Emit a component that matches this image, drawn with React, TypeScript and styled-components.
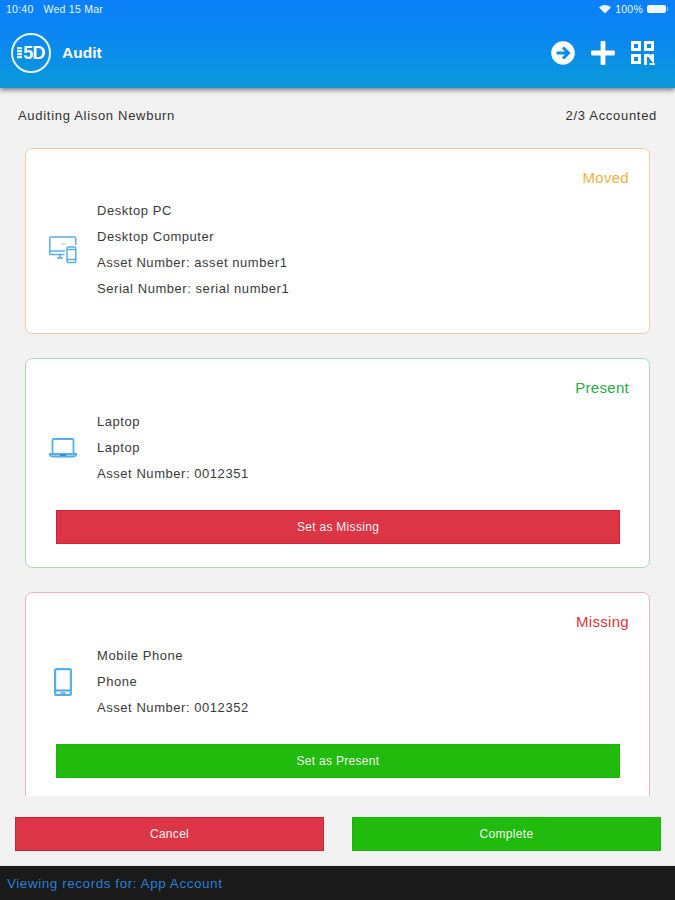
import React from "react";
import styled, { createGlobalStyle } from "styled-components";

const Global = createGlobalStyle`
  html, body { margin: 0; padding: 0; height: 100%; background: #f2f2f2; }
  #root { height: 100%; }
  * { box-sizing: border-box; }
`;

const Page = styled.div`
  width: 675px;
  height: 900px;
  display: flex;
  flex-direction: column;
  overflow: hidden;
  background: #f2f2f2;
  font-family: "Liberation Sans", Arial, sans-serif;
  color: #333;
`;

const Header = styled.header`
  height: 88px;
  flex: none;
  background: linear-gradient(180deg, #0a80fb 0%, #0a88f0 45%, #0a9ad8 100%);
  box-shadow: 0 2px 5px rgba(0, 0, 0, 0.5);
  color: #fff;
  position: relative;
  z-index: 1;
`;

const StatusBar = styled.div`
  height: 18px;
  padding: 0 7px 0 6px;
  display: flex;
  align-items: center;
  justify-content: space-between;
  font-size: 10.5px;
  letter-spacing: 0.25px;
  color: #eaf4ff;
`;

const StatusGroup = styled.div<{ $gap: number }>`
  display: flex;
  align-items: center;
  gap: ${(p) => p.$gap}px;
`;

const Battery = styled.span`
  width: 19px;
  height: 8px;
  margin-right: 2px;
  background: #eef6ff;
  border-radius: 2px;
  display: block;
  position: relative;
  &::after {
    content: "";
    position: absolute;
    right: -2px;
    top: 2px;
    width: 1.500px;
    height: 4px;
    background: rgba(238, 246, 255, 0.6);
  }
`;

const NavBar = styled.div`
  height: 70px;
  padding: 0 20px 0 11px;
  display: flex;
  align-items: center;
  justify-content: space-between;
`;

const Brand = styled.div`
  display: flex;
  align-items: center;
  gap: 11px;
`;

const Logo = styled.div`
  width: 40px;
  height: 40px;
  border: 2px solid #e8f4ff;
  border-radius: 50%;
  display: flex;
  align-items: center;
  justify-content: center;
  gap: 1px;
  font-size: 18px;
  font-weight: 700;
  letter-spacing: -0.8px;
`;

const LogoMark = styled.span`
  width: 5px;
  height: 12px;
  flex: none;
  background: repeating-linear-gradient(180deg, rgba(255, 255, 255, 0.85) 0 2px, rgba(255, 255, 255, 0.25) 2px 3px);
`;

const Title = styled.span`
  font-size: 15.5px;
  font-weight: 700;
`;

const NavIcons = styled.div`
  display: flex;
  align-items: center;
  gap: 16px;
`;

const Summary = styled.div`
  height: 55px;
  flex: none;
  padding: 0 18px 0 18px;
  margin-bottom: 5px;
  display: flex;
  align-items: center;
  justify-content: space-between;
  font-size: 13px;
  letter-spacing: 0.7px;
  color: #333;
`;

const List = styled.main`
  flex: 1;
  min-height: 0;
  overflow: hidden;
  padding: 0 25px;
  display: flex;
  flex-direction: column;
  gap: 24px;
`;

const palette = {
  moved: { border: "#f8c8a0", text: "#f7b13a" },
  present: { border: "#a8dca8", text: "#2aa84a" },
  missing: { border: "#f0b4ba", text: "#e2323f" },
};

type Status = keyof typeof palette;

const Card = styled.section<{ $status: Status; $action: boolean }>`
  flex: none;
  background: #fff;
  border: 1px solid ${(p) => palette[p.$status].border};
  border-radius: 7px;
  padding: 19px 20px ${(p) => (p.$action ? 23 : 31)}px 30px;
`;

const StatusLabel = styled.div<{ $status: Status }>`
  height: 20px;
  line-height: 20px;
  text-align: right;
  font-size: 15px;
  letter-spacing: 0.3px;
  color: ${(p) => palette[p.$status].text};
`;

const Body = styled.div<{ $action: boolean }>`
  margin-top: ${(p) => (p.$action ? 11 : 10)}px;
  display: flex;
  align-items: center;
`;

const IconCell = styled.div`
  width: 16px;
  flex: none;
  margin-left: -1px;
  margin-right: 26px;
  display: flex;
  justify-content: center;
  color: #58aee6;
  & > svg { flex: none; }
`;

const Lines = styled.div`
  display: flex;
  flex-direction: column;
`;

const Line = styled.div`
  height: 26px;
  line-height: 26px;
  font-size: 13px;
  letter-spacing: 0.55px;
  color: #3a3a3a;
`;

const Action = styled.button<{ $tone: "red" | "green" }>`
  display: block;
  width: calc(100% - 9px);
  height: 34px;
  margin-top: 23px;
  border: 1px solid ${(p) => (p.$tone === "red" ? "#d81f33" : "#16b900")};
  background: ${(p) => (p.$tone === "red" ? "#dc3545" : "#20bb0c")};
  color: #f4f4f4;
  font: inherit;
  font-size: 12px;
  letter-spacing: 0.3px;
  padding: 0;
`;

const Footer = styled.footer`
  height: 69px;
  flex: none;
  background: #f2f2f2;
  padding: 21px 14px 14px 15px;
  display: flex;
  gap: 28px;
  position: relative;
`;

const FooterButton = styled(Action)`
  flex: 1;
  margin: 0;
  width: auto;
`;

const BottomBar = styled.div`
  height: 35px;
  flex: none;
  background: #1a1a1a;
  border-top: 1px solid #e8e8e8;
  padding: 0 7px;
  display: flex;
  align-items: center;
  font-size: 13.5px;
  letter-spacing: 0.55px;
  color: #2a7fd6;
`;

const WifiIcon = () => (
  <svg width="12" height="10" viewBox="0 0 24 20" fill="#eaf4ff">
    <path d="M12 19 0 7a17 17 0 0 1 24 0z" />
  </svg>
);

const ArrowIcon = () => (
  <svg width="24" height="24" viewBox="0 0 24 24">
    <circle cx="12" cy="12" r="11.800" fill="#fff" />
    <path d="M5.500 12H17M12 6.500l5.500 5.500-5.500 5.500" fill="none" stroke="#0a8ee8" strokeWidth="3" />
  </svg>
);

const PlusIcon = () => (
  <svg width="24" height="24" viewBox="0 0 24 24">
    <path d="M12 1.500v21M1.500 12h21" stroke="#fff" strokeWidth="4.800" strokeLinecap="round" />
  </svg>
);

const QrIcon = () => (
  <svg width="24" height="24" viewBox="0 0 24 24" fill="none" stroke="#fff" strokeWidth="3">
    <rect x="1.500" y="1.500" width="7" height="7" />
    <rect x="14.500" y="1.500" width="7" height="7" />
    <rect x="1.500" y="14.500" width="7" height="7" />
    <path d="M14.500 24V14.500H18L21.500 19V13" strokeWidth="2.800" />
    <path d="M18.500 23h5.500" strokeWidth="2" />
  </svg>
);

const DesktopIcon = () => (
  <svg width="28" height="28" viewBox="0 0 28 28" fill="none" stroke="currentColor" strokeWidth="1.500">
    <path d="M15.500 18.500H2a1.200 1.200 0 0 1-1.200-1.200V2A1.200 1.200 0 0 1 2 .9h23.500a1.200 1.200 0 0 1 1.200 1.200V9" />
    <path d="M1 15h15" />
    <path d="M8 22h6M11 18.500V22" />
    <path d="M12 8h5" strokeWidth="1" opacity=".6" />
    <rect x="18" y="11" width="8.800" height="15.500" rx="1.500" fill="#fff" />
    <path d="M18 23.500h8.800M18 13.500h8.800" />
  </svg>
);

const LaptopIcon = () => (
  <svg width="28" height="20" viewBox="0 0 28 20" fill="none" stroke="currentColor" strokeWidth="1.800">
    <path d="M3.500 15.500V2.500A1.500 1.500 0 0 1 5 1h18a1.500 1.500 0 0 1 1.500 1.500v13" />
    <path d="M.8 16h26.400c0 1.500-1 2.500-2.500 2.500H3.300C1.800 18.500.8 17.500.8 16z" fill="currentColor" fillOpacity=".3" />
    <path d="M11 17h6" stroke="#1d8fe0" />
  </svg>
);

const PhoneIcon = () => (
  <svg width="18" height="28" viewBox="0 0 18 28" fill="none" stroke="currentColor" strokeWidth="2.200">
    <rect x="1.100" y="1.100" width="15.800" height="25.800" rx="1.500" />
    <path d="M1 22.500h16" />
    <path d="M6.500 25h5" strokeWidth="1.600" />
  </svg>
);

type Item = {
  status: Status;
  label: string;
  icon: React.ReactNode;
  lines: string[];
  action?: { label: string; tone: "red" | "green" };
};

const items: Item[] = [
  {
    status: "moved",
    label: "Moved",
    icon: <DesktopIcon />,
    lines: ["Desktop PC", "Desktop Computer", "Asset Number: asset number1", "Serial Number: serial number1"],
  },
  {
    status: "present",
    label: "Present",
    icon: <LaptopIcon />,
    lines: ["Laptop", "Laptop", "Asset Number: 0012351"],
    action: { label: "Set as Missing", tone: "red" },
  },
  {
    status: "missing",
    label: "Missing",
    icon: <PhoneIcon />,
    lines: ["Mobile Phone", "Phone", "Asset Number: 0012352"],
    action: { label: "Set as Present", tone: "green" },
  },
];

export default function App() {
  return (
    <Page>
      <Global />
      <Header>
        <StatusBar>
          <StatusGroup $gap={10}>
            <span>10:40</span>
            <span>Wed 15 Mar</span>
          </StatusGroup>
          <StatusGroup $gap={4}>
            <WifiIcon />
            <span>100%</span>
            <Battery />
          </StatusGroup>
        </StatusBar>
        <NavBar>
          <Brand>
            <Logo>
              <LogoMark />
              5D
            </Logo>
            <Title>Audit</Title>
          </Brand>
          <NavIcons>
            <ArrowIcon />
            <PlusIcon />
            <QrIcon />
          </NavIcons>
        </NavBar>
      </Header>
      <Summary>
        <span>Auditing Alison Newburn</span>
        <span>2/3 Accounted</span>
      </Summary>
      <List>
        {items.map((item) => (
          <Card key={item.status} $status={item.status} $action={!!item.action}>
            <StatusLabel $status={item.status}>{item.label}</StatusLabel>
            <Body $action={!!item.action}>
              <IconCell>{item.icon}</IconCell>
              <Lines>
                {item.lines.map((line, i) => (
                  <Line key={i}>{line}</Line>
                ))}
              </Lines>
            </Body>
            {item.action && <Action $tone={item.action.tone}>{item.action.label}</Action>}
          </Card>
        ))}
      </List>
      <Footer>
        <FooterButton $tone="red">Cancel</FooterButton>
        <FooterButton $tone="green">Complete</FooterButton>
      </Footer>
      <BottomBar>Viewing records for: App Account</BottomBar>
    </Page>
  );
}
